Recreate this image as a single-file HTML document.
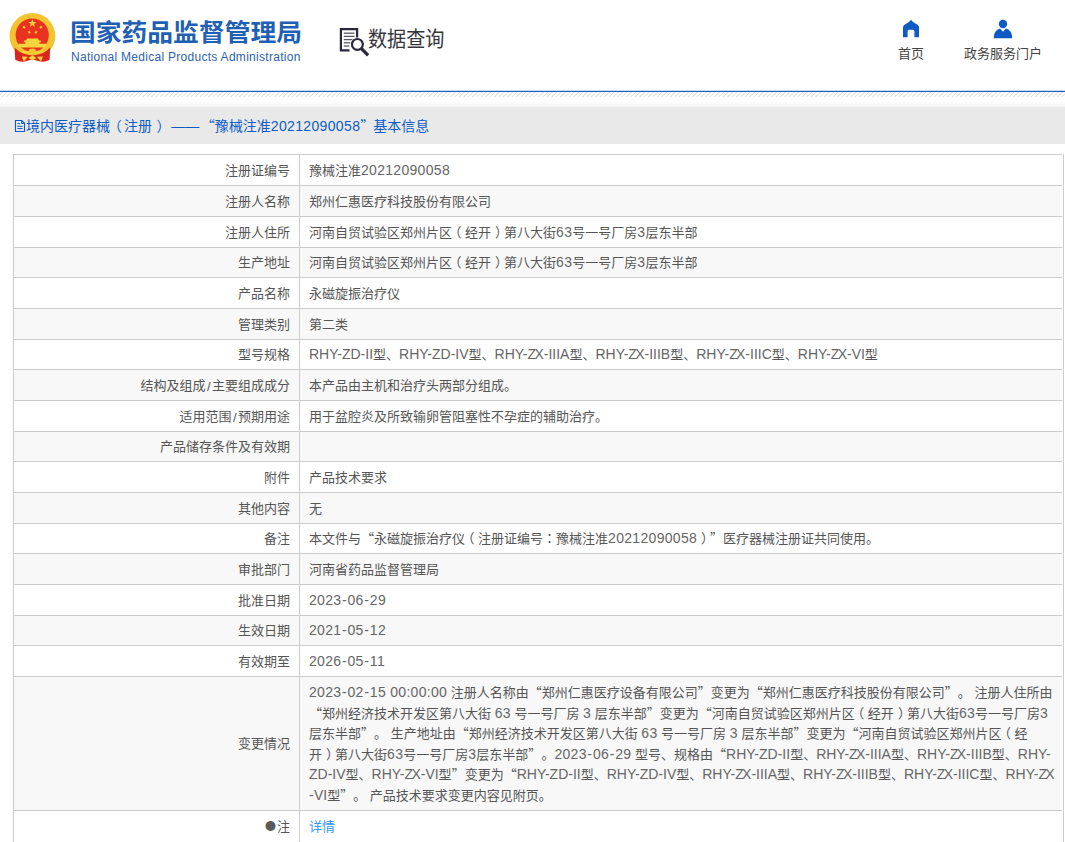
<!DOCTYPE html>
<html lang="zh-CN">
<head>
<meta charset="utf-8">
<title>国家药品监督管理局 数据查询</title>
<style>
html,body{margin:0;padding:0;}
body{width:1065px;height:842px;overflow:hidden;background:#fff;position:relative;
  font-family:"Liberation Sans","Noto Sans CJK SC",sans-serif;font-size:13px;color:#555;}
.abs{position:absolute;}
#logo{left:8px;top:10px;width:50px;height:56px;}
#title{left:70px;top:15px;font-size:24px;font-weight:bold;color:#1f5fb4;white-space:nowrap;line-height:36px;letter-spacing:0;transform-origin:0 0;transform:scaleX(1.074);}
#sub{left:71px;top:49px;font-size:12px;color:#2a63b0;white-space:nowrap;line-height:16px;letter-spacing:0.29px;font-family:"Liberation Sans",sans-serif;}
#qicon{left:338px;top:26px;width:32px;height:32px;}
#qtext{left:368px;top:24px;font-size:21px;color:#35353c;white-space:nowrap;line-height:30px;transform-origin:0 0;transform:scaleX(0.91);}
.nav{top:46px;font-size:13px;line-height:16px;color:#444;white-space:nowrap;text-align:center;}
#blue{left:0;top:90px;width:1065px;height:2px;background:linear-gradient(#c9dbf0 0,#c9dbf0 50%,#1a63c0 50%,#1a63c0 100%);}
#hatch{left:0;top:92px;width:1065px;height:5px;
  background:repeating-linear-gradient(135deg,#fff 0,#fff 1.1px,#e2e2e2 1.5px,#e2e2e2 2.0px,#fff 2.4px,#fff 3.11px);}
#fade{left:0;top:97px;width:1065px;height:10px;background:linear-gradient(#fff,#fff 40%,#f4f4f4);}
#bar{left:0;top:107px;width:1065px;height:37px;background:#e9e9e9;}
#bartext{left:26px;top:115px;line-height:20px;color:#0b5bc7;white-space:nowrap;font-size:14px;}
#tbl{left:13px;top:154px;width:1051px;height:700px;border-left:1px solid #ccc;border-right:1px solid #ccc;box-sizing:border-box;}
.r{position:absolute;left:0;width:1048px;border-top:1px solid #ccc;box-sizing:border-box;display:flex;}
.r.g{background:#f8f8f8;}
.k{width:286px;box-sizing:border-box;border-right:1px solid #ccc;padding-right:9px;padding-top:2px;display:flex;align-items:center;justify-content:flex-end;white-space:nowrap;line-height:20px;}
.v{flex:1;padding-left:9px;padding-right:0;padding-top:2px;display:flex;align-items:center;}
.v a{color:#3399fa;text-decoration:none;}
.multi{white-space:nowrap;}
.ln{height:20.5px;line-height:20.5px;}
.ln span{line-height:1;}
.zx{letter-spacing:-1.7px;}
.h{margin:0 0.6px;}
.sl{padding:0 1.4px;}
.pl{position:relative;left:-3.5px;}
.pr{position:relative;left:4px;}
.c{font-family:"Noto Sans CJK JP",sans-serif;}
.t{white-space:nowrap;line-height:20px;}
.t span,.k span{line-height:1;}
#tbl,#bartext{text-spacing-trim:space-all;}
.l{font-size:14px;letter-spacing:0;color:#666;}
.d{font-size:14px;letter-spacing:0.3px;color:#666;}
.q{font-family:"Noto Sans CJK SC",sans-serif;}
.s .k,.s .v{padding-top:1px;}
</style>
</head>
<body>
<svg id="logo" class="abs" viewBox="0 0 50 56">
  <circle cx="24.4" cy="25.9" r="22.9" fill="#f3c42f"/>
  <circle cx="24.2" cy="25.1" r="16.6" fill="#e9321f"/>
  <path d="M6.6 37.6 Q10 41.5 15 43.6 Q24.4 47.2 33.8 43.6 Q38.8 41.5 42.2 37.6 L41.6 49.8 Q37 52.6 32.4 51.6 L24.4 49.6 L16.4 51.6 Q11.8 52.6 7.2 49.8 Z" fill="#da251c"/>
  <g fill="#f6d63c">
    <polygon points="24.40,9.10 25.41,12.01 28.49,12.07 26.04,13.93 26.93,16.88 24.40,15.12 21.87,16.88 22.76,13.93 20.31,12.07 23.39,12.01"/><polygon points="17.10,15.57 16.83,16.97 18.06,17.72 16.64,17.89 16.31,19.29 15.70,17.99 14.27,18.11 15.32,17.13 14.76,15.81 16.02,16.50"/><polygon points="32.00,15.57 33.08,16.50 34.34,15.81 33.78,17.13 34.83,18.11 33.40,17.99 32.79,19.29 32.46,17.89 31.04,17.72 32.27,16.97"/><polygon points="21.65,20.33 21.88,21.74 23.28,22.02 22.01,22.68 22.18,24.10 21.16,23.09 19.86,23.69 20.51,22.41 19.53,21.36 20.95,21.58"/><polygon points="27.65,20.33 28.35,21.58 29.77,21.36 28.79,22.41 29.44,23.69 28.14,23.09 27.12,24.10 27.29,22.68 26.02,22.02 27.42,21.74"/>
    <path d="M19.2 28.6 L29.8 28.6 L31 30.6 L32.6 30.6 L33.2 32.2 L31.4 32.2 L31.4 33.8 L38.2 33.8 L38.2 37.6 L10.6 37.6 L10.6 33.8 L17.4 33.8 L17.4 32.2 L15.6 32.2 L16.2 30.6 L17.8 30.6 Z"/>
    <path d="M13.8 46.4 L19.8 46.8 L15.8 51.4 Z M35 46.4 L29 46.8 L33 51.4 Z"/>
    <path d="M24.4 45.2 L28.4 48 L24.4 50.4 L20.4 48 Z"/>
  </g>
  <path d="M13.5 41.5 Q19 44 24.4 40.2 Q29.8 44 35.3 41.5" fill="none" stroke="#f6d63c" stroke-width="1.6"/>
  <ellipse cx="24.4" cy="40.6" rx="3.6" ry="2.2" fill="#f3c42f"/>
</svg>
<div id="title" class="abs">国家药品监督管理局</div>
<div id="sub" class="abs">National Medical Products Administration</div>

<svg id="qicon" class="abs" viewBox="0 0 32 32">
  <path d="M19.1 11.5 L19.1 3.2 L2.9 3.2 L2.9 24.3 L11.5 24.3" fill="none" stroke="#2b2939" stroke-width="2.2"/>
  <g stroke="#5a5866" stroke-width="1.3"><path d="M5.8 7.2 H16.5"/><path d="M5.8 10.4 H16.5"/><path d="M5.8 13.6 H14.5"/><path d="M5.8 16.8 H12.3"/><path d="M5.8 20 H11.3"/></g>
  <circle cx="19.4" cy="18.4" r="5.4" fill="#fff" stroke="#2b2939" stroke-width="2.2"/>
  <path d="M23.8 22.9 L29 28.2" stroke="#2b2939" stroke-width="3.2" stroke-linecap="square"/>
</svg>
<div id="qtext" class="abs">数据查询</div>

<svg class="abs" style="left:902px;top:19px;width:18px;height:19px" viewBox="0 0 18 19">
  <path d="M9 0.8 Q10 2.6 13 4.3 Q17 6.4 17 8.2 L17 18.2 L12.4 18.2 L12.4 12.2 Q12.4 10.8 10.8 10.8 L7.2 10.8 Q5.6 10.8 5.6 12.2 L5.6 18.2 L1 18.2 L1 8.2 Q1 6.4 5 4.3 Q8 2.6 9 0.8 Z" fill="#0f5bc6"/>
</svg>
<div class="abs nav" style="left:898px;width:26px;">首页</div>
<svg class="abs" style="left:993px;top:19px;width:20px;height:20px" viewBox="0 0 20 20">
  <circle cx="10" cy="5" r="4.2" fill="#0f5bc6"/>
  <path d="M0.8 19.2 Q0.8 11.5 7 9.6 L10 12.8 L13 9.6 Q19.2 11.5 19.2 19.2 Z" fill="#0f5bc6"/>
</svg>
<div class="abs nav" style="left:963px;width:80px;">政务服务门户</div>

<div id="blue" class="abs"></div>
<div id="hatch" class="abs"></div>
<div id="fade" class="abs"></div>
<div id="bar" class="abs"></div>
<svg class="abs" style="left:14px;top:119px;width:12px;height:14px" viewBox="0 0 12 14">
  <path d="M1.5 1.5 H7.7 L10.5 4.3 V12.5 H1.5 Z" fill="none" stroke="#0b5bc7" stroke-width="1.1"/>
  <path d="M7.6 1.6 V4.4 H10.4" fill="none" stroke="#0b5bc7" stroke-width="1"/>
  <path d="M3.4 4.6 H6 M3.4 7.3 H8.6 M3.4 9.6 H8.6" stroke="#0b5bc7" stroke-width="1"/>
</svg>
<div id="bartext" class="abs">境内医疗器械<span style="position:relative;left:-2.3px">（</span>注册<span style="position:relative;left:4.5px">）</span><span style="margin-left:5.2px">——</span><span class="q" style="margin-left:1.6px">“</span>豫械注准<span style="letter-spacing:0.35px">20212090058</span><span class="q">”</span><span style="margin-left:-1px">基本信息</span></div>

<div id="tbl" class="abs">
  <div class="r" style="top:0;height:31px"><div class="k">注册证编号</div><div class="v"><div class="t">豫械注准<span class="d">20212090058</span></div></div></div>
  <div class="r g" style="top:31px;height:31px"><div class="k">注册人名称</div><div class="v"><div class="t">郑州仁惠医疗科技股份有限公司</div></div></div>
  <div class="r" style="top:62px;height:31px"><div class="k">注册人住所</div><div class="v"><div class="t">河南自贸试验区郑州片区<span class="pl">（</span>经开<span class="pr">）</span>第八大街<span class="d">63</span>号一号厂房<span class="d">3</span>层东半部</div></div></div>
  <div class="r g s" style="top:93px;height:30px"><div class="k">生产地址</div><div class="v"><div class="t">河南自贸试验区郑州片区<span class="pl">（</span>经开<span class="pr">）</span>第八大街<span class="d">63</span>号一号厂房<span class="d">3</span>层东半部</div></div></div>
  <div class="r" style="top:123px;height:31px"><div class="k">产品名称</div><div class="v"><div class="t">永磁旋振治疗仪</div></div></div>
  <div class="r g" style="top:154px;height:31px"><div class="k">管理类别</div><div class="v"><div class="t">第二类</div></div></div>
  <div class="r s" style="top:185px;height:30px"><div class="k">型号规格</div><div class="v"><div class="t"><span class="l">RHY-ZD-II</span>型、<span class="l">RHY-ZD-IV</span>型、<span class="l">RHY-<span class="zx">Z</span>X-IIIA</span>型、<span class="l">RHY-<span class="zx">Z</span>X-IIIB</span>型、<span class="l">RHY-<span class="zx">Z</span>X-IIIC</span>型、<span class="l">RHY-<span class="zx">Z</span>X-VI</span>型</div></div></div>
  <div class="r g" style="top:215px;height:31px"><div class="k">结构及组成<span class="sl">/</span>主要组成成分</div><div class="v"><div class="t">本产品由主机和治疗头两部分组成。</div></div></div>
  <div class="r" style="top:246px;height:31px"><div class="k">适用范围<span class="sl">/</span>预期用途</div><div class="v"><div class="t">用于盆腔炎及所致输卵管阻塞性不孕症的辅助治疗。</div></div></div>
  <div class="r g s" style="top:277px;height:30px"><div class="k">产品储存条件及有效期</div><div class="v"></div></div>
  <div class="r" style="top:307px;height:31px"><div class="k">附件</div><div class="v"><div class="t">产品技术要求</div></div></div>
  <div class="r g" style="top:338px;height:31px"><div class="k">其他内容</div><div class="v"><div class="t">无</div></div></div>
  <div class="r s" style="top:369px;height:30px"><div class="k">备注</div><div class="v"><div class="t">本文件与<span class="q">“</span>永磁旋振治疗仪<span class="pl">（</span>注册证编号<span class="c" lang="ja">：</span>豫械注准<span class="d">20212090058</span><span class="pr">）</span><span class="q">”</span>医疗器械注册证共同使用。</div></div></div>
  <div class="r g" style="top:399px;height:31px"><div class="k">审批部门</div><div class="v"><div class="t">河南省药品监督管理局</div></div></div>
  <div class="r" style="top:430px;height:31px"><div class="k">批准日期</div><div class="v"><div class="t"><span class="d">2023<span class="h">-</span>06<span class="h">-</span>29</span></div></div></div>
  <div class="r g s" style="top:461px;height:30px"><div class="k">生效日期</div><div class="v"><div class="t"><span class="d">2021<span class="h">-</span>05<span class="h">-</span>12</span></div></div></div>
  <div class="r" style="top:491px;height:31px"><div class="k">有效期至</div><div class="v"><div class="t"><span class="d">2026<span class="h">-</span>05<span class="h">-</span>11</span></div></div></div>
  <div class="r g" style="top:522px;height:134px"><div class="k" style="padding-top:0">变更情况</div><div class="v" style="padding-top:2px"><div class="multi"><div class="ln"><span class="d">2023<span class="h">-</span>02<span class="h">-</span>15 00:00:00</span> 注册人名称由<span class="q">“</span>郑州仁惠医疗设备有限公司<span class="q">”</span>变更为<span class="q">“</span>郑州仁惠医疗科技股份有限公司<span class="q">”</span>。 注册人住所由</div><div class="ln"><span class="q">“</span>郑州经济技术开发区第八大街 <span class="d">63</span> 号一号厂房 <span class="d">3</span> 层东半部<span class="q">”</span>变更为<span class="q">“</span>河南自贸试验区郑州片区<span class="pl">（</span>经开<span class="pr">）</span>第八大街<span class="d">63</span>号一号厂房<span class="d">3</span></div><div class="ln">层东半部<span class="q">”</span>。 生产地址由<span class="q">“</span>郑州经济技术开发区第八大街 <span class="d">63</span> 号一号厂房 <span class="d">3</span> 层东半部<span class="q">”</span>变更为<span class="q">“</span>河南自贸试验区郑州片区<span class="pl">（</span>经</div><div class="ln">开<span class="pr">）</span>第八大街<span class="d">63</span>号一号厂房<span class="d">3</span>层东半部<span class="q">”</span>。<span class="d">2023<span class="h">-</span>06<span class="h">-</span>29</span> 型号、规格由<span class="q">“</span><span class="l">RHY-ZD-II</span>型、<span class="l">RHY-<span class="zx">Z</span>X-IIIA</span>型、<span class="l">RHY-<span class="zx">Z</span>X-IIIB</span>型、<span class="l">RHY-</span></div><div class="ln"><span class="l">ZD-IV</span>型、<span class="l">RHY-<span class="zx">Z</span>X-VI</span>型<span class="q">”</span>变更为<span class="q">“</span><span class="l">RHY-ZD-II</span>型、<span class="l">RHY-ZD-IV</span>型、<span class="l">RHY-<span class="zx">Z</span>X-IIIA</span>型、<span class="l">RHY-<span class="zx">Z</span>X-IIIB</span>型、<span class="l">RHY-<span class="zx">Z</span>X-IIIC</span>型、<span class="l">RHY-<span class="zx">Z</span>X</span></div><div class="ln"><span class="d">-</span><span class="l">VI</span>型<span class="q">”</span>。 产品技术要求变更内容见附页。</div></div></div></div>
  <div class="r" style="top:656px;height:40px"><div class="k" style="padding-bottom:10px"><span class="q" style="color:#5a5a5a;font-size:11px;position:relative;top:-1px;margin-right:1px">●</span>注</div><div class="v" style="padding-bottom:10px"><div class="t"><a>详情</a></div></div></div>
</div>
</body>
</html>
